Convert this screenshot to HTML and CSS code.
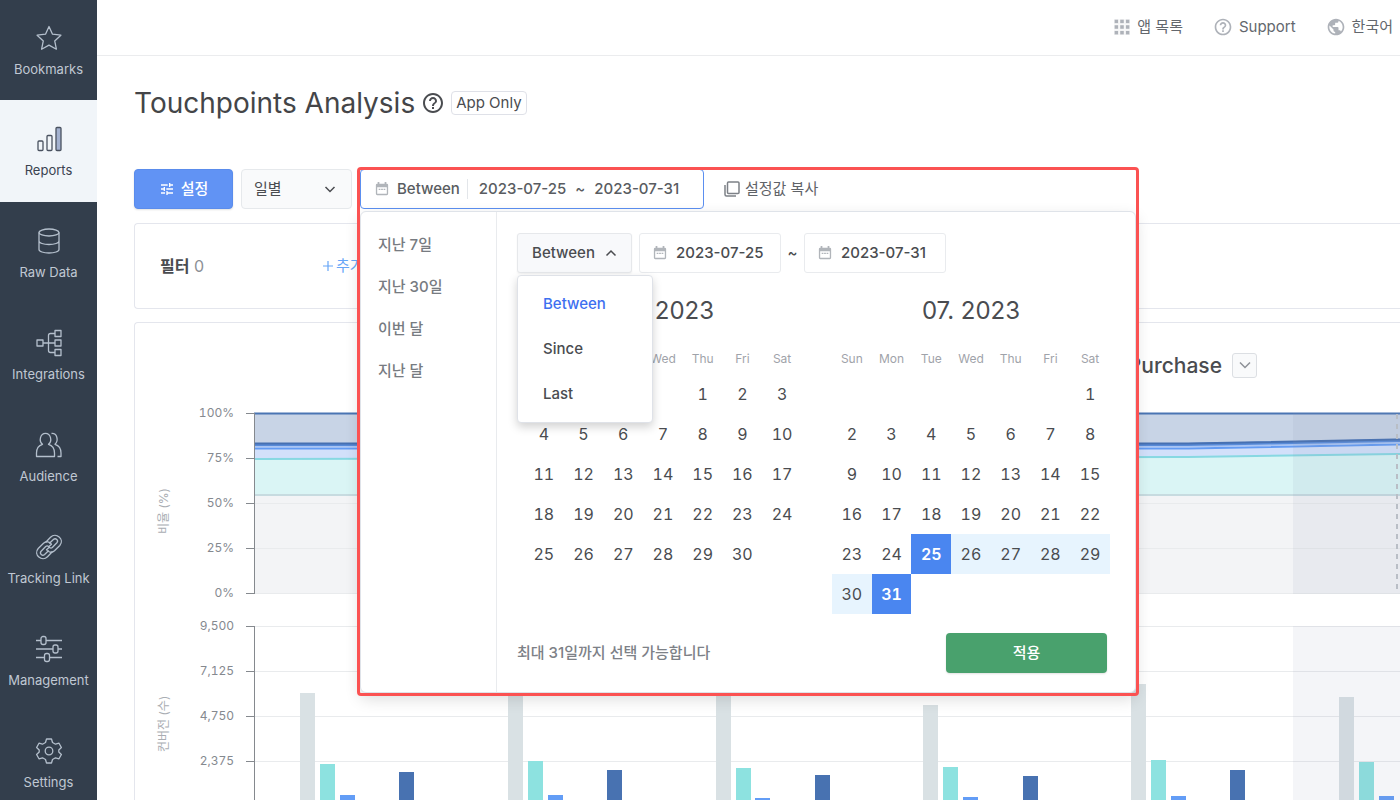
FILE: index.html
```html
<!DOCTYPE html>
<html lang="ko">
<head>
  <meta charset="UTF-8">
  <title>Touchpoints Analysis</title>
  <meta name="viewport" content="width=device-width, initial-scale=1.0">
  <link rel="stylesheet" href="styles.css">
</head>
<body>
  <svg width="0" height="0" class="symbols" aria-hidden="true">
    <symbol id="calendar" viewBox="0 0 16 16">
      <path d="M4 0v3M12 0v3" stroke="currentColor" stroke-width="2"/>
      <path fill="currentColor" fill-rule="evenodd" d="M2.500 2h11A1.500 1.500 0 0 1 15 3.500v10a1.500 1.500 0 0 1-1.500 1.500h-11A1.500 1.500 0 0 1 1 13.500v-10A1.500 1.500 0 0 1 2.500 2zM2.500 6v7.500h11V6z"/>
      <path d="M4.200 8.500h2M7 8.500h2M9.800 8.500h2" stroke="currentColor" stroke-width="1.500"/>
    </symbol>
    <symbol id="help" viewBox="0 0 24 24">
      <path fill="currentColor" d="M11 18h2v-2h-2v2zm1-16C6.480 2 2 6.480 2 12s4.480 10 10 10 10-4.480 10-10S17.520 2 12 2zm0 18c-4.410 0-8-3.590-8-8s3.590-8 8-8 8 3.590 8 8-3.590 8-8 8zm0-14c-2.210 0-4 1.790-4 4h2c0-1.100.9-2 2-2s2 .9 2 2c0 2-3 1.750-3 5h2c0-2.250 3-2.500 3-5 0-2.210-1.790-4-4-4z"/>
    </symbol>
  </svg>

  <div class="app">
    <nav class="sidebar">
      <a href="#" class="nav-item">
        <svg viewBox="0 0 28 28"><path d="M14 2.500l3.500 7.700 8.400 1-6.200 5.700 1.700 8.300-7.400-4.100-7.400 4.100 1.700-8.300-6.200-5.700 8.400-1z"/></svg>
        <span>Bookmarks</span>
      </a>
      <a href="#" class="nav-item active">
        <svg viewBox="0 0 28 28"><rect x="3" y="16" width="5" height="9.500" rx="1"/><rect x="12" y="10.500" width="5" height="15" rx="1"/><rect x="21" y="2.500" width="5" height="23" rx="1" fill="#a3b1cf"/></svg>
        <span>Reports</span>
      </a>
      <a href="#" class="nav-item">
        <svg viewBox="0 0 28 28"><ellipse cx="14" cy="5.500" rx="10" ry="3.500"/><path d="M4 5.500v17c0 2 4.500 3.500 10 3.500s10-1.500 10-3.500v-17M4 14c0 2 4.500 3.500 10 3.500S24 16 24 14"/></svg>
        <span>Raw Data</span>
      </a>
      <a href="#" class="nav-item">
        <svg viewBox="0 0 28 28"><rect x="2" y="11" width="6" height="6"/><rect x="20" y="1.500" width="6" height="6"/><rect x="20" y="11" width="6" height="6"/><rect x="20" y="20.500" width="6" height="6"/><path d="M8 14h12M20 4.500h-4.500a2 2 0 0 0-2 2v15a2 2 0 0 0 2 2H20"/></svg>
        <span>Integrations</span>
      </a>
      <a href="#" class="nav-item">
        <svg viewBox="0 0 28 28"><path d="M1.500 25.500V22c0-4.500 2-7.500 6-8.700-4-3.300-2.300-11 3-11s7 7.700 3 11c4 1.200 6 4.200 6 8.700v3.500zM16.500 2.500c5.500-.5 7.500 6.800 3.500 10.800 4 1.200 6 4.200 6 8.700v3.500h-3.500"/></svg>
        <span>Audience</span>
      </a>
      <a href="#" class="nav-item">
        <svg viewBox="0 0 28 28"><path d="M10.500 9.500l5-5.200c5.500-5.500 14.500 2.200 9.300 8.200l-5.300 5.300c-2.500 2.300-6.500 1.700-8-1l2.800-2.600c1 1.200 2 1.200 3 .3l4.600-4.800c2-2.300-1.200-5.200-3.500-3.200l-4.200 4"/><path d="M17.500 18.500l-5 5.200c-5.500 5.500-14.500-2.200-9.300-8.200l5.300-5.300c2.500-2.300 6.500-1.700 8 1l-2.800 2.600c-1-1.200-2-1.200-3-.3l-4.600 4.800c-2 2.300 1.200 5.200 3.500 3.200l4.200-4"/></svg>
        <span>Tracking Link</span>
      </a>
      <a href="#" class="nav-item">
        <svg viewBox="0 0 28 28"><rect x="6" y="1.500" width="5" height="8" rx="2"/><rect x="18" y="10" width="5" height="8" rx="2"/><rect x="9.500" y="18.500" width="5" height="8" rx="2"/><path d="M1 5.500h5M11 5.500h16M1 14h17M23 14h4M1 22.500h8.500M14.500 22.500H27"/></svg>
        <span>Management</span>
      </a>
      <a href="#" class="nav-item">
        <svg viewBox="0 0 28 28"><circle cx="14" cy="14" r="3.800"/><path d="M11.500 2h5l1 3.500 3 1.700 3.500-1 2.400 4.300-2.600 2.500v2l2.600 2.500-2.400 4.300-3.500-1-3 1.700-1 3.500h-5l-1-3.500-3-1.700-3.500 1-2.400-4.300L4.200 15v-2l-2.600-2.500L4 6.200l3.500 1 3-1.700z"/></svg>
        <span>Settings</span>
      </a>
    </nav>

    <div class="page">
      <header class="topbar">
        <a href="#" class="top-link">
          <svg viewBox="0 0 16 16" fill="currentColor"><path d="M1 1h4v4H1zM6 1h4v4H6zM11 1h4v4h-4zM1 6h4v4H1zM6 6h4v4H6zM11 6h4v4h-4zM1 11h4v4H1zM6 11h4v4H6zM11 11h4v4h-4z" stroke="#fff" stroke-width=".7"/></svg>
          <span>앱 목록</span>
        </a>
        <a href="#" class="top-link">
          <svg class="big"><use href="#help"/></svg>
          <span>Support</span>
        </a>
        <a href="#" class="top-link">
          <svg class="big" viewBox="0 0 24 24" fill="currentColor"><path d="M12 2C6.480 2 2 6.480 2 12s4.480 10 10 10 10-4.480 10-10S17.520 2 12 2zm-1 17.930c-3.950-.49-7-3.850-7-7.930 0-.62.080-1.210.210-1.790L9 15v1c0 1.100.9 2 2 2v1.930zm6.900-2.540c-.26-.81-1-1.390-1.900-1.390h-1v-3c0-.55-.45-1-1-1H8v-2h2c.55 0 1-.45 1-1V7h2c1.100 0 2-.9 2-2v-.41c2.930 1.190 5 4.060 5 7.410 0 2.080-.8 3.970-2.100 5.390z"/></svg>
          <span>한국어</span>
        </a>
      </header>

      <main class="content">
        <div class="title-row">
          <h1>Touchpoints Analysis</h1>
          <svg class="title-help"><use href="#help"/></svg>
          <span class="tag">App Only</span>
        </div>

        <div class="toolbar">
          <button type="button" class="btn btn-primary">
            <svg viewBox="0 0 24 24" fill="currentColor"><path d="M3 17v2h6v-2H3zM3 5v2h10V5H3zm10 16v-2h8v-2h-8v-2h-2v6h2zM7 9v2H3v2h4v2h2V9H7zm14 4v-2H11v2h10zm-6-4h2V7h4V5h-4V3h-2v6z"/></svg>
            <span>설정</span>
          </button>
          <div class="select-wrap">
            <select aria-label="기간 단위">
              <option>일별</option>
              <option>주별</option>
              <option>월별</option>
            </select>
            <svg viewBox="0 0 12 12"><path d="M1.500 4L6 8.500 10.500 4"/></svg>
          </div>

          <div class="range">
            <button type="button" class="range-field">
              <svg class="cal-icon"><use href="#calendar"/></svg>
              <span class="range-type">Between</span>
              <span class="range-dates"><span>2023-07-25</span><span>~</span><span>2023-07-31</span></span>
            </button>

            <div class="picker">
              <ul class="presets">
                <li><button type="button">지난 7일</button></li>
                <li><button type="button">지난 30일</button></li>
                <li><button type="button">이번 달</button></li>
                <li><button type="button">지난 달</button></li>
              </ul>
              <div class="picker-body">
                <div class="picker-inputs">
                  <div class="mode">
                    <button type="button" class="mode-btn" aria-expanded="true">
                      <span>Between</span>
                      <svg viewBox="0 0 12 12"><path d="M1.500 8.500L6 4l4.500 4.500"/></svg>
                    </button>
                    <div class="mode-menu">
                      <button type="button" class="selected">Between</button>
                      <button type="button">Since</button>
                      <button type="button">Last</button>
                    </div>
                  </div>
                  <label class="date-input">
                    <svg class="cal-icon"><use href="#calendar"/></svg>
                    <input type="text" value="2023-07-25" aria-label="시작일">
                  </label>
                  <span class="tilde">~</span>
                  <label class="date-input">
                    <svg class="cal-icon"><use href="#calendar"/></svg>
                    <input type="text" value="2023-07-31" aria-label="종료일">
                  </label>
                </div>

                <div class="calendars">
                  <table class="month">
                    <caption>06. 2023</caption>
                    <thead>
                      <tr><th>Sun</th><th>Mon</th><th>Tue</th><th>Wed</th><th>Thu</th><th>Fri</th><th>Sat</th></tr>
                    </thead>
                    <tbody>
                      <tr><td></td><td></td><td></td><td></td><td>1</td><td>2</td><td>3</td></tr>
                      <tr><td>4</td><td>5</td><td>6</td><td>7</td><td>8</td><td>9</td><td>10</td></tr>
                      <tr><td>11</td><td>12</td><td>13</td><td>14</td><td>15</td><td>16</td><td>17</td></tr>
                      <tr><td>18</td><td>19</td><td>20</td><td>21</td><td>22</td><td>23</td><td>24</td></tr>
                      <tr><td>25</td><td>26</td><td>27</td><td>28</td><td>29</td><td>30</td><td></td></tr>
                    </tbody>
                  </table>
                  <table class="month">
                    <caption>07. 2023</caption>
                    <thead>
                      <tr><th>Sun</th><th>Mon</th><th>Tue</th><th>Wed</th><th>Thu</th><th>Fri</th><th>Sat</th></tr>
                    </thead>
                    <tbody>
                      <tr><td></td><td></td><td></td><td></td><td></td><td></td><td>1</td></tr>
                      <tr><td>2</td><td>3</td><td>4</td><td>5</td><td>6</td><td>7</td><td>8</td></tr>
                      <tr><td>9</td><td>10</td><td>11</td><td>12</td><td>13</td><td>14</td><td>15</td></tr>
                      <tr><td>16</td><td>17</td><td>18</td><td>19</td><td>20</td><td>21</td><td>22</td></tr>
                      <tr><td>23</td><td>24</td><td class="edge">25</td><td class="in">26</td><td class="in">27</td><td class="in">28</td><td class="in">29</td></tr>
                      <tr><td class="in">30</td><td class="edge">31</td><td></td><td></td><td></td><td></td><td></td></tr>
                    </tbody>
                  </table>
                </div>

                <div class="picker-footer">
                  <span>최대 31일까지 선택 가능합니다</span>
                  <button type="button" class="btn btn-apply">적용</button>
                </div>
              </div>
            </div>
          </div>

          <button type="button" class="copy-btn">
            <svg viewBox="0 0 16 16"><rect x="3.500" y="1" width="11.500" height="11.500" rx="1"/><path d="M1 4v9.500A1.500 1.500 0 0 0 2.500 15H12"/></svg>
            <span>설정값 복사</span>
          </button>
        </div>

        <section class="card filter-card">
          <div class="filter-label"><b>필터</b> 0</div>
          <button type="button" class="add-btn">
            <svg viewBox="0 0 12 12"><path d="M6 1v10M1 6h10"/></svg>
            <span>추가</span>
          </button>
        </section>

        <section class="card chart-card">
          <div class="chart-head">
            <h2>Purchase</h2>
            <button type="button" class="expand-btn" aria-label="지표 선택">
              <svg viewBox="0 0 12 12"><path d="M1 3.500l5 5 5-5"/></svg>
            </button>
          </div>

          <div class="chart">
            <div class="axis-title">비율 (%)</div>
            <div class="axis-labels"><span>100%</span><span>75%</span><span>50%</span><span>25%</span><span>0%</span></div>
            <svg class="plot">
              <path fill="#f3f4f6" d="M8 91H2000V190H8z"/>
              <path fill="#daf5f5" d="M8 55L942 53L1150 50H2000V91H8z"/>
              <path fill="#d2e0fa" d="M8 44H942L1150 40H2000V50H1150L942 53L8 55z"/>
              <path fill="#c8d4e6" d="M8 9H2000V36H1150L942 40H8z"/>
              <path class="grid-line" d="M8 99.500H2000M8 144.500H2000M8 189.500H2000"/>
              <g fill="none" stroke-width="2">
                <path stroke="#c7dbe0" d="M8 91H2000"/>
                <path stroke="#87d8e2" d="M8 55L942 53L1150 50H2000"/>
                <path stroke="#a9c4f3" d="M8 42.500H942L1150 38.500H2000"/>
                <path stroke="#639bf3" d="M8 44.500H942L1150 40.500H2000"/>
                <path stroke="#588bd8" stroke-width="3" d="M8 40.500H942L1150 36.500H2000"/>
                <path stroke="#4670b2" d="M8 39.500H942L1150 35.500H2000"/>
                <path stroke="#4a75b3" d="M8 9.500H2000"/>
              </g>
              <path fill="#8a8fb0" fill-opacity=".1" d="M1047 9h953v181h-953z"/>
              <path stroke="#b9bec6" stroke-width="2" stroke-dasharray="5 5" d="M1151 10v180"/>
              <path class="axis-line" d="M0 9.500h8M0 54.500h8M0 99.500h8M0 144.500h8M0 189.500h8M8.500 9v181"/>
            </svg>
          </div>

          <div class="chart">
            <div class="axis-title">컨버전 (수)</div>
            <div class="axis-labels"><span>9,500</span><span>7,125</span><span>4,750</span><span>2,375</span><span>0</span></div>
            <svg class="plot">
              <path class="grid-line" d="M8 9.500H2000M8 54.500H2000M8 99.500H2000M8 144.500H2000M8 189.500H2000"/>
              <path fill="#d9e1e4" d="M54 76h15v114H54zM262 72h15v118h-15zM470 70h15v120h-15zM677 88h15v102h-15zM885 67h15v123h-15zM1093 80h15v110h-15z"/>
              <path fill="#8de2e0" d="M74 147h15v43H74zM282 144h15v46h-15zM490 151h15v39h-15zM697 150h15v40h-15zM905 143h15v47h-15zM1113 145h15v45h-15z"/>
              <path fill="#639df6" d="M94 178h15v12H94zM302 178h15v12h-15zM509 181h15v9h-15zM717 180h15v10h-15zM925 179h15v11h-15zM1133 179h15v11h-15z"/>
              <path fill="#4872b1" d="M153 155h15v35h-15zM361 153h15v37h-15zM569 158h15v32h-15zM777 159h15v31h-15zM984 153h15v37h-15z"/>
              <path fill="#8a8fb0" fill-opacity=".09" d="M1047 9h953v181h-953z"/>
              <path class="axis-line" d="M0 9.500h8M0 54.500h8M0 99.500h8M0 144.500h8M0 189.500h8M8.500 9v181"/>
            </svg>
          </div>
        </section>
      </main>
    </div>
  </div>
</body>
</html>
```
FILE: styles.css
```css
* {
  box-sizing: border-box;
  margin: 0;
  padding: 0;
}

body {
  font-family: Inter, "Noto Sans CJK KR", sans-serif;
  font-size: 15px;
  line-height: 20px;
  color: #4a4c50;
  background: #fff;
}

button, input, select {
  font: inherit;
  color: inherit;
  border: none;
  background: none;
}

button {
  cursor: pointer;
}

a {
  color: inherit;
  text-decoration: none;
}

svg {
  flex-shrink: 0;
}

.symbols {
  display: none;
}

.app {
  display: flex;
  height: 100vh;
  overflow: hidden;
}

/* sidebar */
.sidebar {
  width: 97px;
  flex-shrink: 0;
  background: #333e4c;
}

.nav-item {
  display: flex;
  flex-direction: column;
  align-items: center;
  gap: 7px;
  height: 102px;
  padding-top: 25px;
  font-size: 13px;
  color: #c0c8d3;
}

.nav-item:first-child {
  height: 100px;
  padding-top: 24px;
}

.nav-item svg {
  width: 28px;
  height: 28px;
  fill: none;
  stroke: #b4bfcc;
  stroke-width: 1.300;
  stroke-linejoin: round;
}

.nav-item.active {
  background: #f1f5f9;
  color: #3a4350;
}

.nav-item.active svg {
  stroke: #4a5260;
}

.page {
  flex: 1;
  min-width: 0;
}

/* top bar */
.topbar {
  display: flex;
  justify-content: flex-end;
  align-items: center;
  gap: 30px;
  height: 56px;
  padding: 0 7px 2px 0;
  border-bottom: 1px solid #ebecee;
}

.top-link {
  display: flex;
  align-items: center;
  gap: 6px;
  color: #63676d;
}

.top-link svg {
  width: 18px;
  height: 18px;
  color: #aeb2b9;
}

.top-link svg.big {
  width: 20px;
  height: 20px;
}

.content {
  padding-left: 37px;
}

.title-row {
  display: flex;
  align-items: center;
  gap: 6px;
  height: 94px;
}

.title-row h1 {
  font-size: 28px;
  font-weight: 400;
  line-height: 34px;
  color: #444548;
}

.title-help {
  width: 24px;
  height: 24px;
}

.tag {
  padding: 1px 4px;
  border: 1px solid #dfe1e8;
  border-radius: 4px;
}

/* toolbar */
.toolbar {
  display: flex;
  gap: 8px;
  margin-top: 19px;
}

.btn {
  display: flex;
  align-items: center;
  justify-content: center;
  gap: 6px;
  height: 40px;
  border-radius: 4px;
  color: #fff;
  font-weight: 500;
  box-shadow: 0 1px 2px rgba(0, 0, 0, 0.12);
}

.btn-primary {
  width: 99px;
  background: #6193f4;
  border: 1px solid #5a8cec;
}

.btn-primary svg {
  width: 16px;
  height: 16px;
}

.select-wrap {
  display: flex;
  align-items: center;
  position: relative;
}

.select-wrap select {
  appearance: none;
  width: 111px;
  height: 40px;
  padding: 0 12px;
  border: 1px solid #e6e9ec;
  border-radius: 4px;
  background: #f9fafb;
}

.select-wrap svg {
  position: absolute;
  right: 16px;
  pointer-events: none;
}

.select-wrap svg,
.mode-btn svg,
.expand-btn svg,
.add-btn svg {
  width: 12px;
  height: 12px;
  fill: none;
  stroke: currentColor;
  stroke-width: 1.500;
}

.range {
  position: relative;
}

.range-field {
  display: flex;
  align-items: center;
  width: 344px;
  height: 40px;
  padding: 0 14px;
  border: 1px solid #5b8ff0;
  border-radius: 4px;
  background: #fff;
  font-weight: 500;
  color: #595c61;
  white-space: nowrap;
}

.cal-icon {
  width: 14px;
  height: 14px;
  color: #b1b5ba;
}

.range-type {
  padding: 0 7px 0 8px;
  border-right: 1px solid #e3e6ea;
}

.range-dates {
  display: flex;
  gap: 9px;
  padding-left: 11px;
}

.copy-btn {
  display: flex;
  align-items: center;
  gap: 5px;
  padding-left: 12px;
  color: #5f6368;
}

.copy-btn svg {
  width: 16px;
  height: 16px;
  fill: none;
  stroke: #7d8187;
  stroke-width: 1.500;
}

/* date picker */
.picker {
  position: absolute;
  top: 42px;
  left: 0;
  z-index: 10;
  display: flex;
  width: 776px;
  border: 1px solid #dfe3e9;
  border-radius: 6px;
  background: #fff;
  box-shadow: 0 6px 16px rgba(0, 0, 0, 0.14);
}

/* red frame around the open range field */
.picker::after {
  content: "";
  position: absolute;
  inset: -45px -4px -4px;
  border: 3px solid #fb5252;
  border-radius: 4px;
  pointer-events: none;
}

.presets {
  width: 136px;
  padding: 12px 0 0 17px;
  border-right: 1px solid #e9ebee;
  list-style: none;
}

.presets button {
  height: 42px;
  color: #777b81;
  font-weight: 500;
}

.picker-body {
  flex: 1;
  padding: 21px 25px 19px 20px;
}

.picker-inputs {
  display: flex;
  align-items: center;
  font-weight: 500;
}

.mode {
  position: relative;
  margin-right: 7px;
}

.mode-btn {
  display: flex;
  align-items: center;
  justify-content: center;
  gap: 10px;
  width: 115px;
  height: 40px;
  border: 1px solid #e6e8eb;
  border-radius: 3px;
  background: #f8f9fb;
  box-shadow: 0 1px 2px rgba(0, 0, 0, 0.06);
}

.mode-menu {
  position: absolute;
  top: 42px;
  left: 0;
  z-index: 2;
  display: flex;
  flex-direction: column;
  width: 136px;
  padding: 5px 0 6px;
  border: 1px solid #dfe2e8;
  border-radius: 4px;
  background: #fff;
  box-shadow: 0 4px 10px rgba(0, 0, 0, 0.18);
}

.mode-menu button {
  height: 45px;
  padding-left: 25px;
  text-align: left;
}

.mode-menu .selected {
  color: #3d70f0;
}

.date-input {
  display: flex;
  align-items: center;
  gap: 9px;
  width: 142px;
  height: 40px;
  padding-left: 13px;
  border: 1px solid #e9ebee;
  border-radius: 3px;
}

.date-input input {
  width: 100px;
  outline: none;
}

.tilde {
  width: 23px;
  text-align: center;
}

.calendars {
  display: flex;
  align-items: flex-start;
  gap: 30px;
  padding-left: 7px;
}

.month {
  width: 278px;
  table-layout: fixed;
  border-collapse: collapse;
  text-align: center;
}

.month caption {
  padding: 23px 0 17px;
  font-size: 24px;
  line-height: 30px;
}

.month th {
  height: 31px;
  font-size: 12px;
  font-weight: 400;
  color: #9fa3aa;
}

.month td {
  height: 40px;
  font-size: 16px;
  font-variant-numeric: tabular-nums;
}

.month .in {
  background: #e7f4fe;
}

.month .edge {
  background: #4a86f0;
  color: #fff;
  font-weight: 600;
}

.picker-footer {
  display: flex;
  align-items: center;
  justify-content: space-between;
  margin-top: 19px;
  padding-right: 3px;
  font-weight: 500;
  color: #7d8187;
}

.btn-apply {
  width: 161px;
  background: #49a16d;
}

/* cards */
.card {
  border: 1px solid #e4e6ed;
  border-right: none;
  border-radius: 4px 0 0 4px;
}

.filter-card {
  display: flex;
  align-items: center;
  height: 86px;
  margin: 14px 0 13px;
  padding-left: 25px;
}

.filter-label {
  width: 162px;
  font-size: 16px;
  color: #8c9096;
}

.filter-label b {
  font-weight: 600;
  color: #4a4c50;
}

.add-btn {
  display: flex;
  align-items: center;
  gap: 2px;
  color: #66a6f7;
}

.add-btn svg {
  stroke-width: 1.200;
}

.chart-card {
  padding-left: 20px;
}

.chart-head {
  display: flex;
  align-items: center;
  justify-content: flex-end;
  gap: 10px;
  height: 81px;
  padding: 4px 143px 0 0;
}

.chart-head h2 {
  font-size: 21px;
  font-weight: 500;
}

.expand-btn {
  width: 25px;
  height: 25px;
  border: 1px solid #dcdfe3;
  border-radius: 3px;
  background: #f9fafb;
  color: #8d9197;
}

.chart {
  display: flex;
  margin-bottom: 15px;
}

.axis-title {
  width: 18px;
  padding-bottom: 16px;
  writing-mode: vertical-rl;
  text-orientation: sideways;
  transform: rotate(180deg);
  text-align: center;
  font-size: 12px;
  line-height: 18px;
  color: #a9adb3;
}

.axis-labels {
  display: flex;
  flex-direction: column;
  gap: 27px;
  width: 61px;
  margin-right: 12px;
  text-align: right;
  font-size: 12px;
  line-height: 18px;
  color: #85898f;
  font-variant-numeric: tabular-nums;
}

.plot {
  flex: 1;
  min-width: 0;
  height: 198px;
}

.grid-line {
  stroke: #e9ebed;
}

.axis-line {
  fill: none;
  stroke: #85898e;
}
```
